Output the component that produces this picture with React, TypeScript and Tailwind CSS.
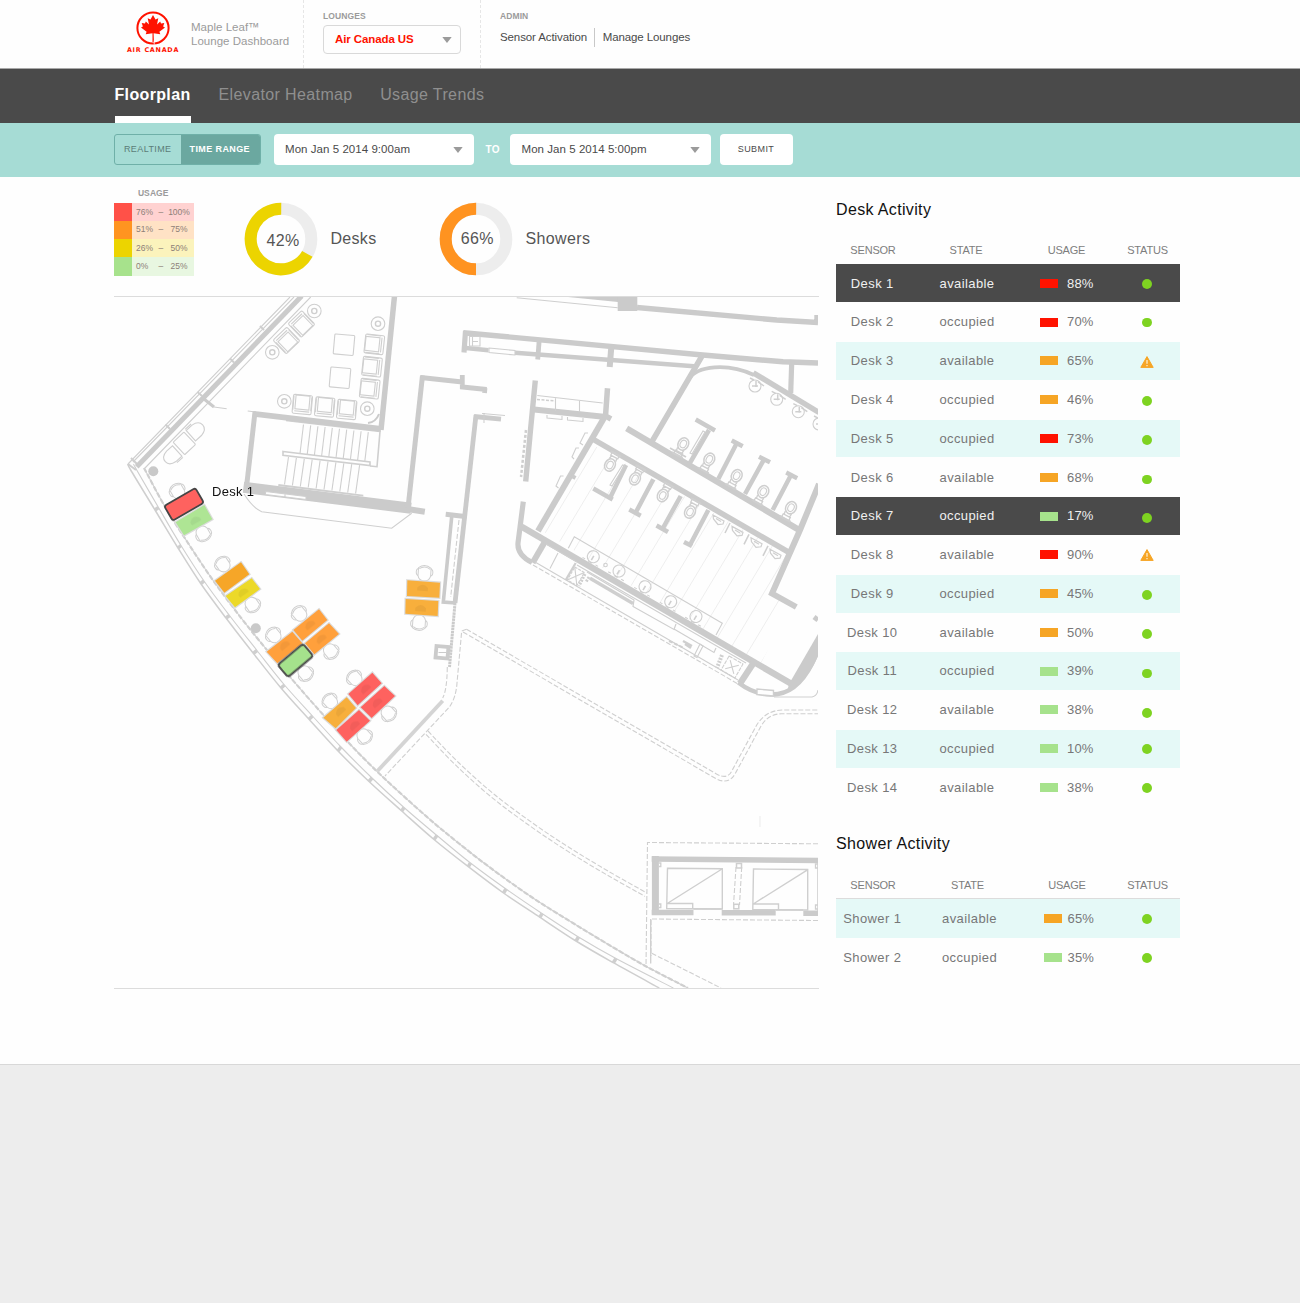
import React from "react";

const RED = "#ff1200";
const ORANGE = "#f6a525";
const GREEN = "#a6e28c";

type Row = { name: string; state: string; color: string; usage: string; warn?: boolean; tone?: string; shift: number };

const desks: Row[] = [
  { name: "Desk 1", state: "available", color: RED, usage: "88%", tone: "dark", shift: 0.5 },
  { name: "Desk 2", state: "occupied", color: RED, usage: "70%", shift: 0.5 },
  { name: "Desk 3", state: "available", color: ORANGE, usage: "65%", warn: true, tone: "mint", shift: 1 },
  { name: "Desk 4", state: "occupied", color: ORANGE, usage: "46%", shift: 1.2 },
  { name: "Desk 5", state: "occupied", color: RED, usage: "73%", tone: "mint", shift: 1.4 },
  { name: "Desk 6", state: "available", color: ORANGE, usage: "68%", shift: 2 },
  { name: "Desk 7", state: "occupied", color: GREEN, usage: "17%", tone: "dark", shift: 2 },
  { name: "Desk 8", state: "available", color: RED, usage: "90%", warn: true, shift: 0 },
  { name: "Desk 9", state: "occupied", color: ORANGE, usage: "45%", tone: "mint", shift: 1.2 },
  { name: "Desk 10", state: "available", color: ORANGE, usage: "50%", shift: 1.5 },
  { name: "Desk 11", state: "occupied", color: GREEN, usage: "39%", tone: "mint", shift: 2.5 },
  { name: "Desk 12", state: "available", color: GREEN, usage: "38%", shift: 2.8 },
  { name: "Desk 13", state: "occupied", color: GREEN, usage: "10%", tone: "mint", shift: 0.2 },
  { name: "Desk 14", state: "available", color: GREEN, usage: "38%", shift: 0.6 },
];

const showers: Row[] = [
  { name: "Shower 1", state: "available", color: ORANGE, usage: "65%", tone: "mint", shift: 0 },
  { name: "Shower 2", state: "occupied", color: GREEN, usage: "35%", shift: 0 },
];

const tones: Record<string, string> = {
  dark: "bg-[#4a4a4a] text-[#f0f0f0]",
  mint: "bg-[#e5f9f7] text-[#777]",
  plain: "text-[#777]",
};

function Warning() {
  return (
    <svg width="14" height="12" viewBox="0 0 14 12">
      <path d="M7 0.6 L13.2 11.4 H0.8 Z" fill={ORANGE} stroke={ORANGE} strokeWidth="1" strokeLinejoin="round" />
      <path d="M7 4 V7.8 M7 9 V10.3" stroke="#fdeccb" strokeWidth="1.3" />
    </svg>
  );
}

function ActivityRow({ row, shower }: { row: Row; shower?: boolean }) {
  return (
    <div
      className={`flex w-[344px] items-center text-[13px] tracking-[0.4px] ${shower ? "mb-[0.3px] h-[38.7px] pt-px" : "mb-[0.85px] h-[37.95px]"} ${tones[row.tone ?? "plain"]}`}
    >
      <div className="w-[72.5px] text-center">{row.name}</div>
      <div className={`text-center ${shower ? "w-[122px]" : "w-[117px]"}`}>{row.state}</div>
      <div className={`flex items-center ${shower ? "ml-[13px] w-[80px] gap-[6px]" : "ml-[14.5px] w-[84px] gap-[9px]"}`}>
        <span className="h-[9px] w-[18px]" style={{ backgroundColor: row.color }} />
        <span className="tracking-[0.15px]">{row.usage}</span>
      </div>
      <div className={`flex justify-center ${shower ? "w-[47px]" : "w-[46px]"}`} style={{ marginTop: row.shift * 2 }}>
        {row.warn ? <Warning /> : <span className="size-[9.5px] rounded-full bg-[#7ed321]" />}
      </div>
    </div>
  );
}

function TableHead({ shower }: { shower?: boolean }) {
  return (
    <div
      className={`flex w-[344px] items-center text-[11px] tracking-[-0.2px] text-[#7d7d7d] ${shower ? "h-[26.5px] pt-[2px]" : "h-[28px]"}`}
    >
      <div className="w-[74px] shrink-0 text-center">SENSOR</div>
      <div className={`shrink-0 text-center ${shower ? "w-[115px]" : "w-[112px]"}`}>STATE</div>
      <div className={`shrink-0 text-center ${shower ? "w-[84px]" : "w-[89px]"}`}>USAGE</div>
      <div className={`shrink-0 text-center ${shower ? "w-[77px]" : "w-[73px]"}`}>STATUS</div>
    </div>
  );
}

function Caret() {
  return (
    <svg width="10" height="6" viewBox="0 0 10 6">
      <path d="M0.3 0 H9.7 L5 6 Z" fill="#9b9b9b" />
    </svg>
  );
}

function Logo() {
  return (
    <div className="flex w-[56px] flex-col items-center">
      <svg width="34" height="34" viewBox="0 0 34 34">
        <circle cx="17" cy="17" r="15.6" fill="none" stroke={RED} strokeWidth="2" />
        <path
          d="M17 4 L14.5 8.6 L11.7 7.3 L13 13.4 L9.8 10.6 L9 12.5 L5.7 12 L6.9 15.4 L5 16.4 L10.6 20.8 L9.7 23.2 L16.5 22.2 V31 H17.9 L17.6 22.2 L24.3 23.2 L23.4 20.8 L29 16.4 L27.1 15.4 L28.3 12 L25 12.5 L24.2 10.6 L21 13.4 L22.3 7.3 L19.5 8.6 Z"
          fill={RED}
        />
        <path d="M18.2 29.5 V33.5" stroke="#fff" strokeWidth="0.8" />
      </svg>
      <div className="mt-[1px] whitespace-nowrap font-['DejaVu_Sans'] text-[6.4px] font-bold leading-[8px] tracking-[0.75px] text-[#ff1200]">
        AIR CANADA
      </div>
    </div>
  );
}

function Donut({ from, color, label }: { from: number; color: string; label: string }) {
  const r = 30.3;
  const c = 2 * Math.PI * r;
  const part = ((360 - from) / 360) * c;
  return (
    <svg width="74" height="74" viewBox="-37 -37 74 74">
      <circle r={r} fill="none" stroke="#ededed" strokeWidth="12" />
      <circle
        r={r}
        fill="none"
        stroke={color}
        strokeWidth="12"
        strokeDasharray={`${part} ${c}`}
        transform={`rotate(${from - 90})`}
      />
      <text x={label === "42%" ? 2 : 1.2} y={label === "42%" ? 6.8 : 5} textAnchor="middle" fontSize="16" fill="#555" letterSpacing="0.3">
        {label}
      </text>
    </svg>
  );
}

const legend = [
  { sw: "bg-[#ff5148]", bg: "bg-[#ffd2d1]", a: "76%", b: "100%", pb: false },
  { sw: "bg-[#ff9420]", bg: "bg-[#ffe2c5]", a: "51%", b: "75%", pb: true },
  { sw: "bg-[#ecd400]", bg: "bg-[#fbf3bc]", a: "26%", b: "50%", pb: false },
  { sw: "bg-[#a7e28c]", bg: "bg-[#e8f7e1]", a: "0%", b: "25%", pb: false },
];

/* ---------- Floor plan ---------- */

type P = [number, number];

function smooth(pts: P[]) {
  let d = `M${pts[0][0]} ${pts[0][1]}`;
  for (let i = 0; i < pts.length - 1; i++) {
    const p0 = pts[Math.max(i - 1, 0)];
    const p1 = pts[i];
    const p2 = pts[i + 1];
    const p3 = pts[Math.min(i + 2, pts.length - 1)];
    d += ` C${p1[0] + (p2[0] - p0[0]) / 6} ${p1[1] + (p2[1] - p0[1]) / 6} ${p2[0] - (p3[0] - p1[0]) / 6} ${p2[1] - (p3[1] - p1[1]) / 6} ${p2[0]} ${p2[1]}`;
  }
  return d;
}

const outerGlass: P[] = [[128, 464], [130.7, 470], [155, 510], [178, 548], [200.7, 583.5], [226, 618], [253.3, 653.3], [281, 688], [309, 719.3], [338, 751], [369, 781.5], [401.7, 811], [434, 839.5], [468.3, 866.7], [503.5, 893], [540, 917.3], [576, 941], [613.3, 962.7], [659.3, 988]];
const midGlass: P[] = [[133.5, 464], [136.7, 470], [158.5, 507.5], [181, 545.5], [204, 581], [229.5, 615.5], [257, 650.5], [284.5, 685], [312.5, 716], [341, 747], [372, 778], [404, 807.5], [437, 835.5], [470.5, 863], [506, 889], [542, 913.5], [578.5, 937], [616, 958.5], [673.3, 988]];
const innerGlass: P[] = [[144, 468], [165, 506.7], [186.7, 541], [210, 576], [235, 610], [262, 644], [290, 677], [318, 709], [348, 742], [380, 774.3], [426.7, 816.7], [459, 843.5], [493.3, 870], [533, 898], [573.3, 923.3], [610, 945.5], [646.7, 966.7], [688, 988]];
const carpetEdge: P[] = [[428, 731], [459, 763], [495, 795], [534, 824], [570, 848], [608, 871], [647, 893]];

const wallColor = "#cbcbcb";
const thin = "#cfcfcf";

function Chair({ x, y, a }: { x: number; y: number; a: number }) {
  return (
    <g transform={`translate(${x} ${y}) rotate(${a})`} fill="#fefefe">
      <rect x="-8.3" y="-4.5" width="16.6" height="7.5" rx="3.5" />
      <path d="M-6.3 -5 Q0 -10 6.3 -5 V3 Q5 8 0 8 Q-5 8 -6.3 3 Z" />
      <path d="M-5.5 -4 Q0 -8 5.5 -4" fill="none" />
    </g>
  );
}

function Armchair({ x, y, a }: { x: number; y: number; a: number }) {
  return (
    <g transform={`translate(${x} ${y}) rotate(${a})`} fill="none">
      <rect x="-9.5" y="-9.5" width="19" height="19" rx="1.5" />
      <rect x="-7" y="-9" width="14" height="14" />
      <path d="M-7.5 7 H7.5 M-9 -8 V6 M9 -8 V6" />
    </g>
  );
}

function Toilet({ x, y, flip }: { x: number; y: number; flip?: boolean }) {
  return (
    <g transform={`translate(${x} ${y}) rotate(${flip ? 208 : 28})`} fill="none">
      <ellipse rx="5.2" ry="6.4" strokeWidth="1.5" />
      <ellipse rx="3" ry="4" />
      <path d="M-3.5 5.5 L-3 9 H3 L3.5 5.5 M-4 9 H4 V13 H-4 Z" strokeWidth="1.3" />
      <path d="M-6 12.5 H6" strokeWidth="2" />
    </g>
  );
}

function Basin({ x, y }: { x: number; y: number }) {
  return (
    <g transform={`translate(${x} ${y}) rotate(30)`} fill="none">
      <circle r="6" />
      <path d="M0 -1 V4" strokeWidth="1.6" />
      <path d="M-9 6 H-6 M6 6 H9 M-2 6.5 H2" />
    </g>
  );
}

function Floorplan() {
  const tables: P[] = [[314.3, 311], [272.3, 352.3], [378, 323.7], [284.3, 401.3], [367.3, 408.7]];
  const desksShapes: [string, string][] = [
    ["197,157 283,105 307,148 222,196", "#aee594"],
    ["315,332 393,277 418,313 343,368", "#f6a628"],
    ["347,378 425,325 450,357 375,412", "#ecd928"],
    ["550,480 627,418 652,450 577,512", "#ffa03c"],
    ["470,545 547,485 577,520 502,580", "#ffa03c"],
    ["585,520 657,460 687,492 613,553", "#ffa03c"],
    ["715,672 787,608 815,640 743,706", "#fe625f"],
    ["752,712 823,648 855,678 785,744", "#fe625f"],
    ["640,743 710,682 738,714 677,775", "#f7af3c"],
    ["679,780 747,720 780,752 710,815", "#fe625f"],
    ["892,331 990,338 988,383 891,378", "#f8af3c"],
    ["887,387 985,393 983,438 886,431", "#f8af3c"],
  ];
  return (
    <svg width="705" height="691" viewBox="114 297 705 691" className="block">
      <defs>
        <clipPath id="room">
          <polygon points="593,445 790,556 771,594 790,607 760,665 541,530" />
        </clipPath>
        <clipPath id="plan">
          <rect x="113" y="297" width="705" height="691" />
        </clipPath>
      </defs>
      <g clipPath="url(#plan)">
        {/* floor tiling */}
        <g clipPath="url(#room)" stroke="#eeeeee" strokeWidth="1">
          {Array.from({ length: 17 }, (_, i) => {
            const x = 585 + i * 14.6;
            const y = 434 + i * 8.3;
            return <line key={i} x1={x} y1={y} x2={x - 90} y2={y + 150} />;
          })}
        </g>

        <g stroke={thin} strokeWidth="1.1" fill="none">
          {/* glazed facade */}
          <path d="M290 297 L128 464 M294 297 L133 462 M310.7 297 L145 468" />
          <path d={smooth(outerGlass)} strokeWidth="1.5" />
          <path d={smooth(midGlass)} />
          <path d={smooth(innerGlass)} />
          <path d={smooth(innerGlass)} strokeWidth="2.2" strokeDasharray="5 2" />
          {outerGlass.slice(2, 18).map((p, i) => (
            <path key={i} d={`M${p[0]} ${p[1]} L${midGlass[i + 2][0]} ${midGlass[i + 2][1]}`} strokeWidth="3.5" />
          ))}
          <path d="M260 326 L264 330 M230 358.5 L234 362.5 M197.5 392 L202 396 M165.5 424.5 L170 429 M131 458 L138 465 M128 464 L136 470" strokeWidth="2" />
          <path d="M214 407 L226.7 408.7 M247.7 411 L256 412" />

          {/* lounge furniture */}
          {tables.map(([x, y]) => (
            <g key={`${x}-${y}`}>
              <circle cx={x} cy={y} r="6.8" />
              <circle cx={x} cy={y} r="2.6" strokeWidth="1.4" />
            </g>
          ))}
          <Armchair x={301.5} y={324} a={136} />
          <Armchair x={286.5} y={340.5} a={136} />
          <Armchair x={374.3} y={344.3} a={-84} />
          <Armchair x={372} y={366.7} a={-84} />
          <Armchair x={369.7} y={388.7} a={-84} />
          <Armchair x={302.3} y={404.5} a={5} />
          <Armchair x={324.7} y={407} a={5} />
          <Armchair x={346.7} y={409.5} a={5} />
          <rect x="334" y="334.7" width="20" height="20" rx="1" transform="rotate(5 344 344.7)" />
          <rect x="330" y="367.7" width="20" height="20" rx="1" transform="rotate(5 340 377.7)" />
          <rect x="176.5" y="435" width="15" height="17" rx="1" transform="rotate(-43 184 443)" />
          <path d="M-7 7 H7 V-1 Q6 -9 0 -9 Q-6 -9 -7 -1 Z M-8.5 7 V-1" transform="translate(196 431) rotate(48)" />
          <path d="M-7 7 H7 V-1 Q6 -9 0 -9 Q-6 -9 -7 -1 Z M-8.5 7 V-1" transform="translate(172 455.7) rotate(-132)" />

          {/* staircase */}
          {Array.from({ length: 10 }, (_, i) => (
            <g key={i}>
              <path d={`M${303.5 + i * 7.2} ${424.5 + i * 0.85} L${300 + i * 7.2} ${453.5 + i * 0.85}`} />
              <path d={`M${288.5 + i * 7.9} ${457 + i * 0.9} L${284.5 + i * 7.9} ${484.5 + i * 1}`} />
            </g>
          ))}
          <path d="M286 420.5 L380 431.5 L377 466.7 L370 466" strokeWidth="1.6" />
          <path d="M283 451.5 L370 462 L370 465.5 L283 455.2 Z" fill="#fefefe" strokeWidth="1.6" />
          <path d="M278.3 485 L363.3 495.7" strokeWidth="1.8" />
          <path d="M244 494 Q253 508 261.7 511.7 L391.7 528.3 L411.7 513.3" />
        </g>

        {/* walls */}
        <g stroke={wallColor} fill="none">
          <path d="M301.7 296 L136.7 466.7" strokeWidth="5" />
          <path d="M204 399 L214 407" strokeWidth="3" />
          <path d="M394.5 296 L381 430" strokeWidth="5.5" />
          <path d="M253 413.8 L381 428.8" strokeWidth="5.8" />
          <path d="M368 423 Q376 422 379 414" strokeWidth="2" />
          <path d="M255 412 L246.5 487" strokeWidth="5" />
          <path d="M243.5 487.3 L411 508.3" strokeWidth="11" />
          <path d="M404 508.5 L424.8 511.8" strokeWidth="6" />
          <path d="M422.5 375.5 L408 508" strokeWidth="5" />
          <path d="M420.7 377.5 L462.3 382 M462.3 375 V387 L486.7 389.5 M485 388 L484.5 393" strokeWidth="4.8" />
          <path d="M474 416.5 L501 419.2" strokeWidth="4.8" />
          <path d="M476 415 L455 603" strokeWidth="4.8" />
          <path d="M445.7 514.3 L465 516.4" strokeWidth="5" />
          <path d="M451.7 516.7 L443.3 602 L456 603" strokeWidth="3.6" />
          <path d="M455 603 L449.5 667" strokeWidth="3" strokeDasharray="2.5 .6" />
          <rect x="436" y="646.5" width="12" height="11.5" strokeWidth="3.8" transform="rotate(5 442 652)" />
          <path d="M438.5 652.5 H446" strokeWidth="1" />
          <path d="M442.7 700.7 L377.5 771" strokeWidth="3.8" stroke="#d4d4d4" />

          <path d="M568 297 L618 302 V297 Z" fill={wallColor} stroke="none" />
          <rect x="617.7" y="296" width="19.6" height="15" fill={wallColor} stroke="none" />
          <path d="M637 307.5 L776.7 320 L818 322.5 M817 315 V322" strokeWidth="5.4" />
          <path d="M463.3 332.7 L700 354.8 L783 361.8 L818 363" strokeWidth="5.4" />
          <path d="M465.5 331 L464 352.5" strokeWidth="5.2" />
          <path d="M463.3 347.7 L488.5 350.2 M515 352.8 L694 366.3" strokeWidth="4.4" />
          <path d="M539.3 339 L537.7 359.5" strokeWidth="4.8" />
          <path d="M611.3 347 L609.7 367" strokeWidth="6" />
          <path d="M702 356 L688 380 L651.7 442" strokeWidth="5.5" />
          <path d="M688 380 C697 365 728 363 754 375" strokeWidth="3.8" />
          <path d="M753.3 372.8 L819 412.5" strokeWidth="5.5" />
          <path d="M791.7 363 L790.7 393" strokeWidth="5.2" />

          <path d="M535.3 380.5 L530.5 430 L525.7 481.5" strokeWidth="5.4" />
          <path d="M534 409.5 L606 417" strokeWidth="6" />
          <path d="M607.5 388.3 L605.5 416 L611 419" strokeWidth="5.5" />
          <path d="M604 418 L538 531" strokeWidth="6" />
          <path d="M571 475.5 L575.5 478" strokeWidth="4" />
          <path d="M523.3 501.7 L518 543 Q517 555 532 562.5" strokeWidth="5.2" />
          <path d="M521.7 526.7 L791.7 684" strokeWidth="6.4" />
          <path d="M544.3 542.7 L532.7 562.7" strokeWidth="6" />

          <path d="M626.7 428.3 L800 530.5" strokeWidth="6.2" />
          <path d="M593.3 439.3 L790 553" strokeWidth="5.6" />
          <path d="M819 484 L800 530 L772 593.5 L796.3 607" strokeWidth="6" />

          {/* cubicle partitions */}
          <path d="M709 430 L689.3 464 M736.7 443.3 L718.3 479 M764 459.3 L745 494 M791 475 L772.7 510" strokeWidth="4.5" />
          <path d="M695.7 419.5 L715 430.5 M731.7 440.5 L742.7 446.3 M759 456.7 L770 462.3 M786.2 472.6 L797.2 478.2" strokeWidth="4.5" />
          <path d="M626 465 L610.5 497 M653.3 479.3 L636 512 M680.7 496 L663 528 M708.3 510 L690 545" strokeWidth="4.5" />
          <path d="M593.3 488.5 L612.7 499.5 M629.3 509.5 L640.7 515.7 M656.5 525.5 L668 532 M684 542 L692 546" strokeWidth="4.5" />

          {/* rounded corner on the east side */}
          <path d="M753.3 663.3 L740 683.5" strokeWidth="6.4" />
          <path d="M738.3 682.5 Q757 697 778 694 Q803 690 818 650" strokeWidth="4.4" />
          <path d="M789 684 L818 634 V656 Q808 680 787 692 Z" fill={wallColor} stroke="none" />
          <path d="M814 617 L818 620" strokeWidth="5" />

          {/* elevator core */}
          <path d="M655.4 856 V914.5" strokeWidth="7" />
          <path d="M651.7 859 L818 860.5" strokeWidth="5.5" />
          <path d="M651.7 912.5 H693.5 M721.7 912.8 H775.7 M803.3 913.2 H818" strokeWidth="5.5" />
          <path d="M818 860 V913" strokeWidth="1.5" />
        </g>

        <g stroke={thin} strokeWidth="1.1" fill="none">
          <path d="M265.5 491.5 L306 496.5 V499.5 L265.5 494.5 Z M285 494 V497" fill="#fefefe" />
          <path d="M516.7 297.7 L617.7 307.7" />
          <path d="M489 348 L515 350.5 V355 L489 352.5 Z" fill="#fefefe" />
          <path d="M469.5 336.5 H480 V346 H469.5 Z M472.5 336.5 V346 M472.5 341.5 H478" />
          <path d="M482 413.5 L505 415.5 M484 413 V423" />
          <path d="M537.3 395.5 L602.7 403 M555.5 398 V411 M579.5 401 V412" />
          <path d="M537 399.5 L556 401" strokeDasharray="3 1.5" strokeWidth="1.5" />
          <path d="M547 415 V418 L562 419.5 V416 M567.5 417 V420 L583 421.5 V418" />
          <path d="M526 430 L521 477" strokeDasharray="3 2" strokeWidth="2.5" />
          <path d="M588 433 L585 433 L580 443 L583 445 M579 448 L576 448 L572 457 L574 459 M563.5 476 L560.5 476 L556 486 L558.5 488" />
          <path d="M459 520 L450.7 597" strokeDasharray="5 2" />
          <path d="M670 448 L686 457" strokeWidth="1.8" />
          <path d="M703 431 L690 453 L692 454 L705 432 Z M622.5 465 L610 485 L612 486 L624.5 466 Z" />

          {[[755, 386], [776.7, 399.3], [798.3, 411.7], [819, 424]].map(([x, y]) => (
            <g key={x}>
              <circle cx={x} cy={y} r="6" />
              <path d={`M${x - 5} ${y - 8} l4 2 m4 2 l6 4 M${x + 1} ${y - 5} v6 M${x - 3} ${y} h6`} strokeWidth="1.5" />
            </g>
          ))}
          {[[683.3, 444], [709.3, 459.3], [736.7, 475.7], [763.3, 491.7], [791, 507.7]].map(([x, y]) => (
            <Toilet key={x} x={x} y={y} />
          ))}
          {[[610, 465], [635, 478.8], [662.7, 495.5], [690, 512]].map(([x, y]) => (
            <Toilet key={x} x={x} y={y} flip />
          ))}
          {[0, 1, 2, 3].map((i) => (
            <g key={i} transform={`translate(${i * 19} ${i * 11.4})`}>
              <path d="M713 515 L724 521 L723 524 L718 524.5 L713.5 519 Z M716 518.5 L721 521.5" strokeWidth="1.2" />
              {i < 3 && <path d="M730 523 L725 533" strokeWidth="1.6" />}
            </g>
          ))}

          {/* vanity counter */}
          <path d="M568.3 548.3 L574.3 536.7 L722.3 623.3 L716 635" />
          {[[593.3, 556.7], [619, 571], [645, 586.7], [670.7, 601.7], [696, 616.5]].map(([x, y]) => (
            <Basin key={x} x={x} y={y} />
          ))}
          <circle cx="605.5" cy="565" r="1.8" />

          {/* service strip */}
          <path d="M535 562 L738 680 M577 565 L746 663" />
          <path d="M533 565 L739 684.5" strokeDasharray="5 2" />
          <path d="M558 553 L550 568.5 M546 544 L577 562" />
          <path d="M575.7 563 L565.7 580" strokeWidth="2.2" />
          <path d="M590 578.3 L633 603.5" strokeWidth="3.4" />
          <path d="M587 572 L634 600 L633 606.5 L674 629.5 L676 624 M674 629 L714 652.5 L716 648" strokeWidth="1.2" />
          <g transform="translate(576 577) rotate(30)">
            <rect x="-6" y="-8" width="11" height="15" strokeDasharray="3 1" />
            <path d="M-6 -8 L5 7 M5 -8 L-6 7" />
          </g>
          <path d="M585 574 L579 586 M589 577 L586 582" strokeDasharray="2 1.2" strokeWidth="3" />
          <g transform="translate(732 667) rotate(30)">
            <rect x="-8" y="-8" width="16" height="16" strokeDasharray="4 1" />
            <path d="M-5 -5 L5 5 M5 -5 L-5 5" />
          </g>
          <path d="M722 655 L717 668" strokeDasharray="2 1.2" strokeWidth="4" />
          <path d="M683 641 L692 646 M685 644 L691 648" strokeWidth="2.4" />
          <path d="M700 644 L694 656 L697 657.5 L703 646 Z" />
          <path d="M669 641 L684 648" strokeDasharray="4 1.5" strokeWidth="2" />
          <path d="M757 689 L773.5 690.5 V696 L757 694.5 Z" fill="#fefefe" strokeWidth="1.4" />
          <path d="M774 697 H812 Q817 696 818 690" />

          {/* carpet outlines */}
          <g strokeDasharray="5 2">
            <path d="M447.3 667 Q447 690 442.7 698" />
            <path d="M466.5 629.3 L461.7 631 L457 683 Q456 698 449 707.5 L385 776" />
            <path d="M463 632 L714 777.5 Q728 786 735 774 L760.5 727 Q768 713.5 782 713.8 H818" />
            <path d="M466.5 629.3 L716 773.7 Q727 780 731.5 771.5 L757 724.5 Q766 710.5 782 710 H818" />
            <path d={smooth(carpetEdge)} />
            <path d={smooth(carpetEdge)} transform="translate(-2 3.4)" />
          </g>
          <path d="M760 816 V827" stroke="#ececec" />

          {/* elevators */}
          <g strokeDasharray="5 2">
            <path d="M818 843.8 L647.5 842.5 L646 967" />
            <path d="M818 920.5 L651 919 V956" />
            <path d="M651.7 953.3 L721 988" />
            <path d="M736 867 L733.5 905 M741.7 867 L739.5 905" />
          </g>
          <path d="M650.7 919 V963.5" strokeWidth="1.3" />
          <path d="M667.5 868.3 L722.3 868.8 V909 L666.7 908.5 Z M668 903 L722 869 M666.7 903.5 H692.7 V909" strokeWidth="1.4" />
          <path d="M753.5 869 L807.7 869.5 V910 L752.8 909.5 Z M754 903.5 L807.5 869.8 M752.8 904 H778.5 V910" strokeWidth="1.4" />
          <path d="M693.5 909 H721.7 M776 910 H803" strokeWidth="1.3" />
          <rect x="736.5" y="863.5" width="5" height="4.5" strokeWidth="1.5" />
          <rect x="733.8" y="904.3" width="5" height="4.5" strokeWidth="1.5" />
          <path d="M659 863 h1.8 v3.5 h-1.8 M659 904 h1.8 v3.5 h-1.8 M818 864 h-2.5 v4 h2.5 M818 905 h-2.5 v4 h2.5" strokeWidth="1.3" />
        </g>
        <circle cx="153.3" cy="471.3" r="5" fill="#c9c9c9" />
        <circle cx="255.8" cy="628.2" r="5" fill="#c9c9c9" />

        {/* chairs and desks */}
        <g stroke="#cfcfcf" strokeWidth="1">
          <Chair x={177.5} y={491} a={-30} />
          <Chair x={203.3} y={534} a={150} />
          <Chair x={222.7} y={564} a={-35} />
          <Chair x={252.5} y={605} a={145} />
          <Chair x={299.3} y={613.5} a={-40} />
          <Chair x={273.5} y={635} a={-40} />
          <Chair x={331} y={651.5} a={140} />
          <Chair x={305.5} y={673.5} a={140} />
          <Chair x={354.5} y={678} a={-42} />
          <Chair x={330} y={701} a={-42} />
          <Chair x={388.7} y={713.7} a={138} />
          <Chair x={364.5} y={736.5} a={138} />
          <Chair x={424.5} y={573} a={4} />
          <Chair x={419} y={623} a={184} />
        </g>
        <g transform="translate(110 470) scale(0.33333)">
          {desksShapes.map(([pts, fill]) => (
            <polygon key={pts} points={pts} fill={fill} stroke="#dcdcdc" strokeWidth="7" paintOrder="stroke" />
          ))}
          <g fill="#000" opacity="0.05">
            {[[255, 150, -30], [398, 366, -36], [598, 463, -40], [522, 525, -40], [632, 505, -40], [765, 655, -42], [800, 697, -42], [690, 722, -42], [732, 765, -42], [938, 353, 4], [932, 414, 4]].map(([x, y, a]) => (
              <path key={`${x}${y}`} d="M-16 10 V0 Q0 -18 16 0 V10 Z" transform={`translate(${x} ${y}) rotate(${a})`} />
            ))}
          </g>
        </g>
        <rect x="166" y="495.8" width="36" height="17" rx="2.5" fill="#fe625f" stroke="#454545" strokeWidth="1.8" transform="rotate(-30 184 504.3)" />
        <rect x="279" y="652.5" width="33" height="16" rx="2.8" fill="#a5e28c" stroke="#454545" strokeWidth="1.8" transform="rotate(-40 295.4 660.5)" />
        <text x="212" y="496" fontSize="13" letterSpacing="0.3" fill="#111">
          Desk 1
        </text>
      </g>
    </svg>
  );
}

export default function App() {
  return (
    <div className="min-h-[1303px] w-[1300px] bg-[#ededed] font-['Liberation_Sans',Arial,sans-serif]">
      <div className="h-[1065px] border-b border-[#d8d8d8] bg-[#fefefe]">
        <header className="flex h-[69px] border-b border-[#a8a8a8] pl-[125px]">
          <div className="flex w-[179px] border-r border-dashed border-[#e6e6e6] pt-[10.5px]">
            <Logo />
            <div className="ml-[10px] mt-[9.4px] whitespace-nowrap text-[11.5px] leading-[14px] tracking-[0.02px] text-[#9b9b9b]">
              Maple Leaf™
              <br />
              Lounge Dashboard
            </div>
          </div>
          <div className="w-[177px] border-r border-dashed border-[#e6e6e6] pl-[19px] pt-[11px]">
            <div className="text-[8.5px] font-bold leading-[10px] tracking-[0.1px] text-[#9b9b9b]">LOUNGES</div>
            <div className="mt-[4px] flex h-[29px] w-[138px] items-center justify-between rounded-[4px] border border-[#d9d9d9] pl-[11px] pr-[8.5px] text-[11.5px] font-bold tracking-[-0.1px] text-[#ff1200]">
              Air Canada US
              <Caret />
            </div>
          </div>
          <div className="pl-[19px] pt-[11px]">
            <div className="text-[8.5px] font-bold leading-[10px] tracking-[0.1px] text-[#9b9b9b]">ADMIN</div>
            <div className="mt-[7px] flex h-[19px] items-center text-[11.5px] tracking-[-0.1px] text-[#4a4a4a]">
              <span className="border-r border-[#c8c8c8] pr-[6.5px] leading-[19px]">Sensor Activation</span>
              <span className="ml-[8px] leading-[19px]">Manage Lounges</span>
            </div>
          </div>
        </header>

        <nav className="flex h-[54px] gap-[27.5px] bg-[#4a4a4a] pl-[114.5px] text-[16px] leading-[52px] tracking-[0.38px] text-[#8f8f8f]">
          <div className="w-[76.5px] border-b-[7px] border-white font-bold tracking-[0.35px] text-white">Floorplan</div>
          <div>Elevator Heatmap</div>
          <div>Usage Trends</div>
        </nav>

        <div className="flex h-[54px] items-center bg-[#a6dcd5] pb-[1px] pl-[113.5px]">
          <div className="flex h-[31px] w-[147px] overflow-hidden rounded-[3px] border border-[#6fb0a8] text-[9px] leading-[29px] tracking-[0.4px]">
            <div className="w-[66.5px] text-center text-[#5b7c78]">REALTIME</div>
            <div className="flex-1 bg-[#6ba8a0] pr-[1px] text-center font-bold text-white">TIME RANGE</div>
          </div>
          <div className="ml-[13px] flex h-[31px] w-[200.5px] items-center justify-between rounded-[4px] bg-white pl-[11.5px] pr-[11px] text-[11.5px] tracking-[0.05px] text-[#4a4a4a]">
            Mon Jan 5 2014 9:00am
            <Caret />
          </div>
          <div className="w-[36px] pl-[1.5px] text-center text-[10px] font-bold tracking-[0.5px] text-white">TO</div>
          <div className="flex h-[31px] w-[200.5px] items-center justify-between rounded-[4px] bg-white pl-[11.5px] pr-[11px] text-[11.5px] tracking-[0.05px] text-[#4a4a4a]">
            Mon Jan 5 2014 5:00pm
            <Caret />
          </div>
          <div className="ml-[9px] flex h-[31px] w-[73px] items-center justify-center rounded-[4px] bg-white text-[9px] tracking-[0.4px] text-[#4a4a4a]">
            SUBMIT
          </div>
        </div>

        <main className="flex pl-[113.5px]">
          <section className="w-[705px]">
            <div className="flex h-[119px]">
              <div className="w-[80.5px] pt-[11px]">
                <div className="pr-[1px] text-center text-[8.5px] font-bold leading-[10px] tracking-[0.1px] text-[#9b9b9b]">USAGE</div>
                <div className="mt-[5px]">
                  {legend.map((l) => (
                    <div key={l.a} className={`flex h-[18.15px] text-[8.5px] leading-[18px] text-[#8d8078] ${l.bg}`}>
                      <span className={`w-[18px] shrink-0 ${l.sw}`} />
                      <span className={`flex shrink-0 ${l.pb ? "items-start leading-[17px]" : ""}`}>
                        <span className="ml-[4.5px] w-[22.5px]">{l.a}</span>
                        <span className="w-[5px]">–</span>
                        <span className="ml-[2px] w-[27px] text-center">{l.b}</span>
                      </span>
                    </div>
                  ))}
                </div>
              </div>
              <div className="ml-[50px] mt-[25px] flex h-[74px] items-center gap-[12.5px] text-[16px] tracking-[0.3px] text-[#555]">
                <Donut from={119.5} color="#ecd400" label="42%" />
                <span>Desks</span>
              </div>
              <div className="ml-[62.5px] mt-[25px] flex h-[74px] items-center gap-[12.5px] text-[16px] tracking-[0.4px] text-[#555]">
                <Donut from={180} color="#ff9320" label="66%" />
                <span>Showers</span>
              </div>
            </div>
            <div className="border-y border-[#dcdcdc]">
              <Floorplan />
            </div>
          </section>

          <section className="ml-[17.5px] pt-[23px]">
            <h2 className="text-[16px] leading-[20px] tracking-[0.35px] text-[#111]">Desk Activity</h2>
            <div className="mt-[16px] h-[28.4px]">
              <TableHead />
            </div>
            <div>
              {desks.map((d) => (
                <ActivityRow key={d.name} row={d} />
              ))}
            </div>
            <h2 className="mt-[28px] text-[16px] leading-[20px] tracking-[0.37px] text-[#111]">Shower Activity</h2>
            <div className="mt-[17px] border-b border-[#dcdcdc]">
              <TableHead shower />
            </div>
            <div>
              {showers.map((d) => (
                <ActivityRow key={d.name} row={d} shower />
              ))}
            </div>
          </section>
        </main>
      </div>
    </div>
  );
}
